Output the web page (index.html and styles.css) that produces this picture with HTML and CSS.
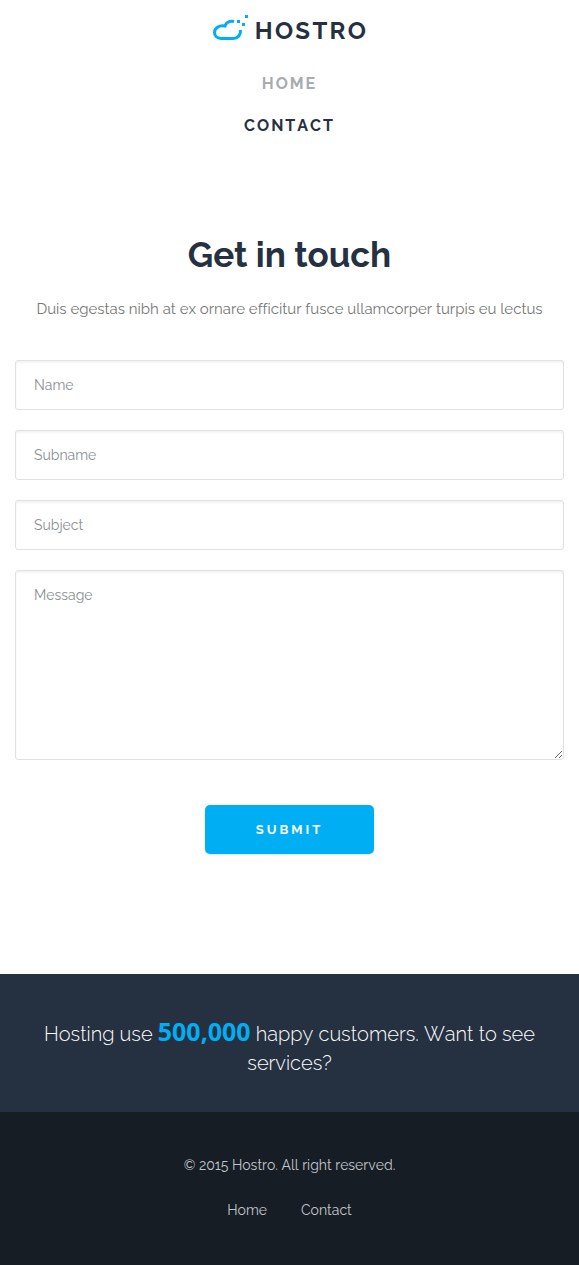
FILE: index.html
```html
<!DOCTYPE html>
<html lang="en">
<head>
<meta charset="utf-8">
<title>Hostro</title>
<link rel="stylesheet" href="styles.css">
</head>
<body>
<header class="header">
  <a class="logo" href="#">
    <svg class="logo-mark" width="36" height="27" viewBox="0 0 36 27">
      <path d="M21 7.5C16 6.3 12.7 9 12 12.1C6 11 1.5 14 1.5 18.5C1.5 22 4 24.4 8 24.4H20C25 24.4 27.6 21.5 27.6 16" fill="none" stroke="#00aef3" stroke-width="3"/>
      <path d="M24 6h3v3h-3zM29 9h3v3h-3zM32 1h3v3h-3z" fill="#00aef3"/>
    </svg>
    <span class="logo-name">HOSTRO</span>
  </a>
  <nav class="nav">
    <a class="nav-link nav-muted" href="#">HOME</a>
    <a class="nav-link" href="#">CONTACT</a>
  </nav>
</header>
<main class="contact">
  <h1 class="title">Get in touch</h1>
  <p class="lead">Duis egestas nibh at ex ornare efficitur fusce ullamcorper turpis eu lectus</p>
  <form class="form">
    <input class="field" type="text" placeholder="Name">
    <input class="field" type="text" placeholder="Subname">
    <input class="field" type="text" placeholder="Subject">
    <textarea class="field area" placeholder="Message"></textarea>
    <button class="submit" type="button">SUBMIT</button>
  </form>
</main>
<section class="banner">
  <p class="banner-text">Hosting use <strong class="count">500,000</strong> happy customers. Want to see<br>services?</p>
</section>
<footer class="footer">
  <p class="copy">© 2015 Hostro. All right reserved.</p>
  <div class="links"><a class="link" href="#">Home</a><a class="link" href="#">Contact</a></div>
</footer>
</body>
</html>
```
FILE: styles.css
```css
* { box-sizing: border-box; }
body { margin: 0; background: #fff; color: #253141; font-family: Raleway, Lato, sans-serif; font-kerning: none; font-variant-ligatures: none; }
a { color: inherit; text-decoration: none; }
p, h1 { margin: 0; }
.header { height: 146px; padding-top: 14px; text-align: center; }
.logo { display: flex; justify-content: center; gap: 6px; height: 49px; }
.logo-mark { flex: none; }
.logo-name { font-size: 24px; font-weight: 700; line-height: 34px; letter-spacing: 2.3px; margin-right: -2px; }
.nav { display: flex; flex-direction: column; }
.nav-link { font-size: 16px; font-weight: 700; line-height: 42px; letter-spacing: 2px; }
.nav-muted { color: #a8abb1; }
.contact { height: 828px; padding: 84px 15px 0; text-align: center; }
.title { font-size: 35px; font-weight: 700; line-height: 49px; font-kerning: normal; }
.lead { margin-top: 17px; font-size: 15px; line-height: 26px; color: #777; white-space: nowrap; }
.form { margin-top: 38px; display: flex; flex-direction: column; gap: 20px; }
.field { display: block; width: 100%; height: 50px; margin: 0; padding: 6px 18px; border: 1px solid #e1e1e1; border-radius: 3px; box-shadow: inset 0 2px 2px rgba(0,0,0,.05); background: #fff; color: #555; font: 14px/20px Raleway, Lato, sans-serif; font-kerning: none; outline: none; }
.field::placeholder { color: #8b8f94; opacity: 1; }
.area { height: 190px; padding-top: 14px; resize: vertical; }
.submit { align-self: center; width: 169px; height: 49px; margin-top: 25px; padding: 0; border: 0; border-radius: 5px; background: #00aef3; color: #fff; box-shadow: 0 1px 2px rgba(0,0,0,.12); font: 700 13px/49px Raleway, Lato, sans-serif; font-kerning: none; letter-spacing: 3px; }
.banner { height: 138px; padding-top: 43px; background: #253141; color: #fff; text-align: center; }
.banner-text { font-size: 20px; font-weight: 300; line-height: 29px; white-space: nowrap; }
.count { color: #00aef3; font: 700 25px/28px "Open Sans", sans-serif; }
.footer { height: 153px; padding-top: 40px; background: #161d25; color: #c3c6ca; font-size: 14px; line-height: 26px; text-align: center; }
.links { display: flex; justify-content: center; gap: 34px; margin-top: 19px; }
```
